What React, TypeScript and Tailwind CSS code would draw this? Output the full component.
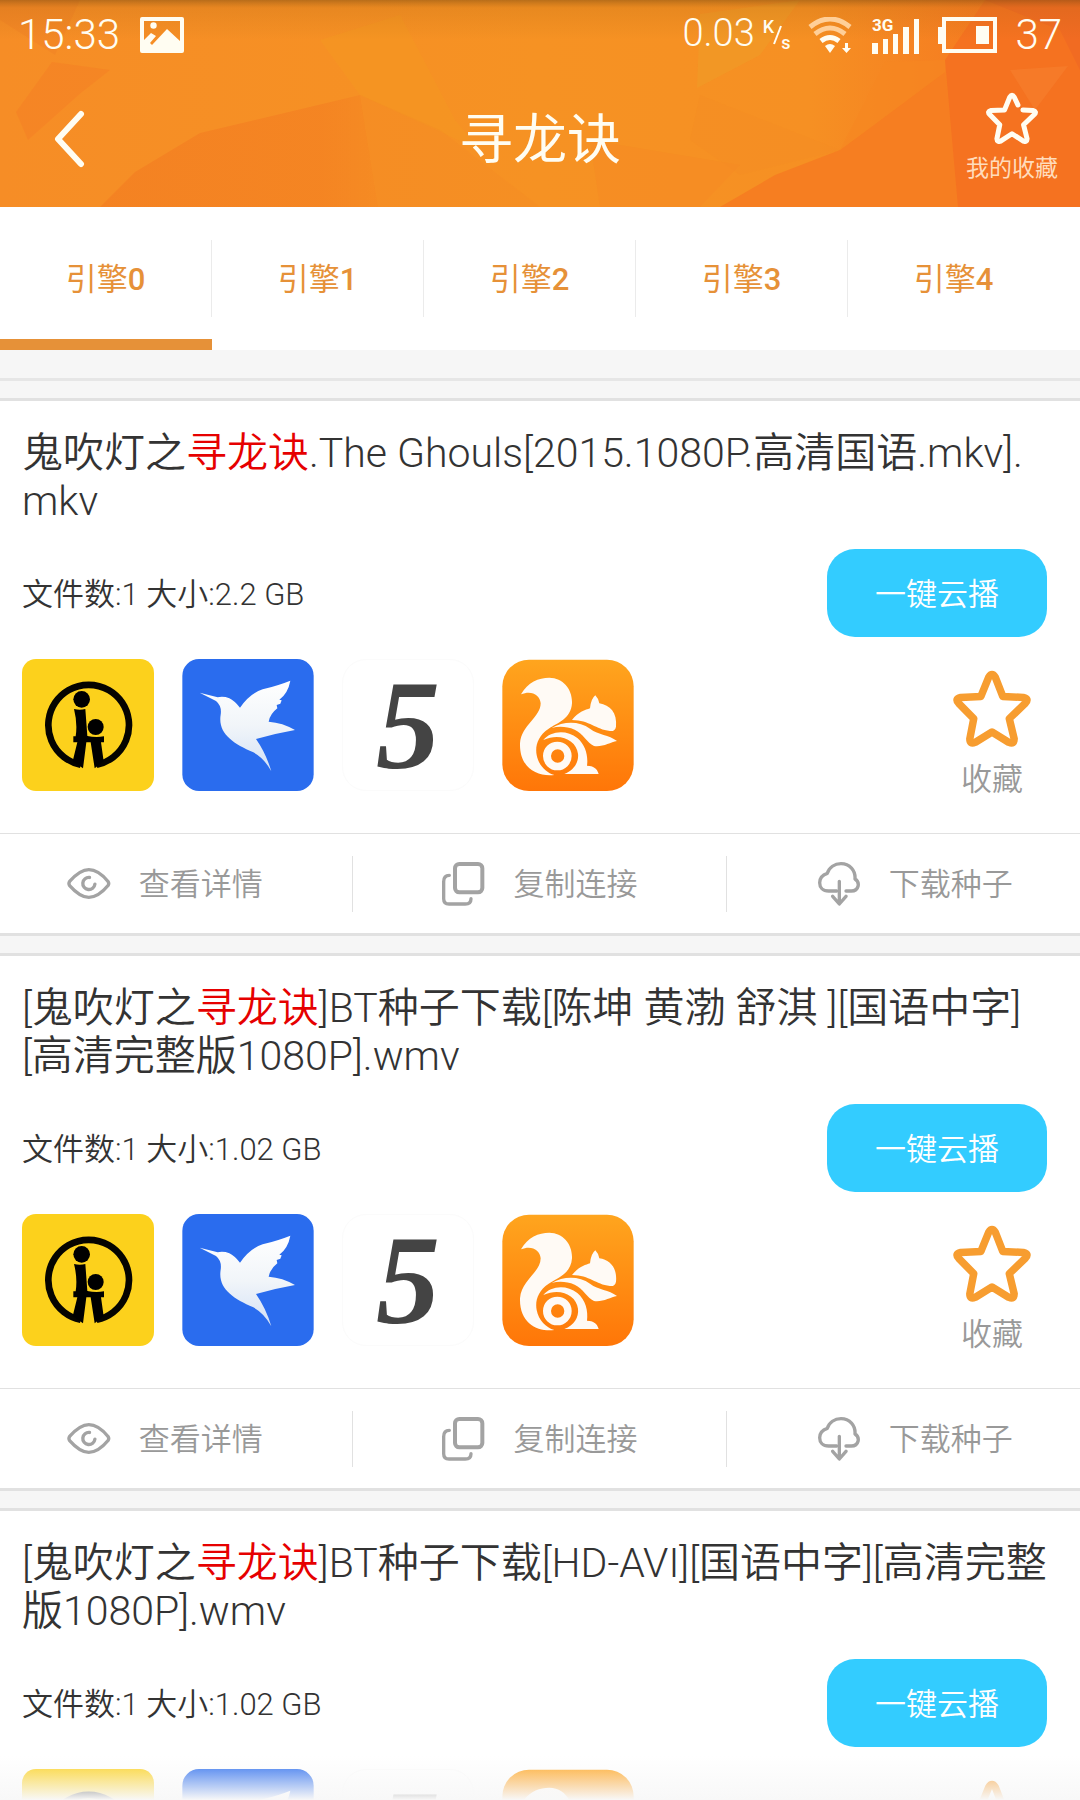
import { useState } from "react";

const engines = [0, 1, 2, 3, 4];

const keyword = "寻龙诀";

const results = [
  {
    id: 1,
    before: "鬼吹灯之",
    after: ".The Ghouls[2015.1080P.高清国语.mkv].mkv",
    files: 1,
    size: "2.2 GB",
  },
  {
    id: 2,
    before: "[鬼吹灯之",
    after: "]BT种子下载[陈坤 黄渤 舒淇 ][国语中字][高清完整版1080P].wmv",
    files: 1,
    size: "1.02 GB",
  },
  {
    id: 3,
    before: "[鬼吹灯之",
    after: "]BT种子下载[HD-AVI][国语中字][高清完整版1080P].wmv",
    files: 1,
    size: "1.02 GB",
  },
];

function HeaderBackground() {
  return (
    <svg className="absolute inset-0 w-full h-full" viewBox="0 0 1080 207" preserveAspectRatio="none" aria-hidden="true">
      <defs>
        <linearGradient id="base" x1="0" x2="1" y1="0" y2="0">
          <stop offset="0" stopColor="#f68d26" />
          <stop offset="0.5" stopColor="#f69223" />
          <stop offset="0.75" stopColor="#f69023" />
          <stop offset="1" stopColor="#f5701f" />
        </linearGradient>
        <linearGradient id="shade" x1="0" x2="0" y1="0" y2="1">
          <stop offset="0" stopColor="#7a4a10" stopOpacity="0.5" />
          <stop offset="0.2" stopColor="#a86010" stopOpacity="0.18" />
          <stop offset="1" stopColor="#a86010" stopOpacity="0" />
        </linearGradient>
        <linearGradient id="facet" x1="0" x2="1" y1="0" y2="0">
          <stop offset="0" stopColor="#f48122" stopOpacity="0.9" />
          <stop offset="0.8" stopColor="#f48122" stopOpacity="0.75" />
          <stop offset="1" stopColor="#f48122" stopOpacity="0.35" />
        </linearGradient>
      </defs>
      <rect width="1080" height="207" fill="url(#base)" />
      <path d="M52 62L110 70L82 92L28 140L16 112Z" fill="#f58024" opacity="0.6" />
      <path d="M0 0H80L55 55L0 20Z" fill="#f08025" opacity="0.4" />
      <path d="M100 207L135 172L200 133L360 95L378 207Z" fill="url(#facet)" />
      <path d="M360 95L320 40L400 15L455 120L480 150Z" fill="#f49a21" opacity="0.45" />
      <path d="M360 95L440 130L540 207H378Z" fill="#f48a24" opacity="0.35" />
      <path d="M697 88L700 14L800 0L760 55Z" fill="#f19a26" opacity="0.7" />
      <path d="M700 95L840 150L740 175L690 140Z" fill="#f68b22" opacity="0.4" />
      <path d="M590 140L740 165L700 207H600Z" fill="#f58a24" opacity="0.5" />
      <path d="M720 207L775 175L840 150L945 72L960 207Z" fill="#f67e21" />
      <path d="M885 62L945 60V72L870 128L840 150Z" fill="#f68722" opacity="0.6" />
      <path d="M945 60L985 0H1080V207H958Z" fill="#f57220" />
      <path d="M985 0H1080V70L1060 30Z" fill="#ee6424" opacity="0.5" />
      <path d="M1010 70L1068 66L1035 110Z" fill="#f78130" opacity="0.5" />
      <rect width="1080" height="40" fill="url(#shade)" />
    </svg>
  );
}

function StarIcon({ className, open = false }: { className: string; open?: boolean }) {
  const d = open
    ? "M625 499L671 502Q690 506 677 520L628 567L644 631Q643 648 627 642L575 608L523 642Q507 648 506 631L519 567L473 520Q460 506 479 502L541 499L565 440Q575 424 585 440L602 476"
    : "M608 499L671 502Q690 506 677 520L628 567L643 629Q643 647 627 640L575 608L523 640Q507 647 507 629L519 567L473 520Q460 506 479 502L541 499L565 440Q575 424 585 440Z";
  return (
    <svg className={className} viewBox="456 418 238 236" fill="none" stroke="currentColor" strokeLinecap="round" strokeLinejoin="round" strokeWidth="23" aria-hidden="true">
      <path d={d} />
    </svg>
  );
}

function StatusBar() {
  return (
    <div className="relative h-[70px] px-[18px] flex items-center justify-between">
      <div className="flex items-center gap-5">
        <span className="text-[42px] leading-[50px]">15:33</span>
        <svg className="w-11 h-9" viewBox="0 0 44 36" aria-hidden="true">
          <path fillRule="evenodd" fill="currentColor" d="M2 0H42Q44 0 44 2V34Q44 36 42 36H2Q0 36 0 34V2Q0 0 2 0ZM4 4V23L11 16L16 19L10 26L12 28L27 12L40 24V4Z" />
          <circle cx="13.500" cy="8.500" r="3.200" fill="currentColor" />
        </svg>
      </div>
      <div className="flex items-center">
        <span className="pb-1 text-[38px] leading-[46px]">0.03</span>
        <span className="ml-2 h-10 flex text-[18px] leading-[24px] font-medium">
          <span>K</span>
          <svg className="w-[9px] h-5 -mx-px shrink-0 self-center" viewBox="0 0 9 20" aria-hidden="true">
            <path d="M8 1L1 19" stroke="currentColor" strokeWidth="2" />
          </svg>
          <span className="self-end">s</span>
        </span>
        <svg className="ml-[18px] w-11 h-9" viewBox="0 0 44 36" fill="none" aria-hidden="true">
          <path d="M2 10Q22 -6 42 10" stroke="#ffcf98" strokeWidth="5" />
          <path d="M7 17Q22 5 37 17" stroke="#ffcf98" strokeWidth="5" />
          <path d="M13 24Q22 17 31 24" stroke="currentColor" strokeWidth="5" />
          <path d="M17 29Q22 25 27 29L22 36Z" fill="currentColor" />
          <path d="M37 26H40V31H43L38.500 36L34 31H37Z" fill="currentColor" />
        </svg>
        <svg className="ml-5 w-12 h-[38px]" viewBox="0 0 48 38" fill="currentColor" aria-hidden="true">
          <text x="0" y="15" fontSize="17" fontWeight="700">3G</text>
          <path d="M0 27H6V38H0ZM11 23H16V38H11ZM21 18H26V38H21ZM31 11H37V38H31ZM42 3H47V38H42Z" />
        </svg>
        <svg className="ml-[18px] w-[59px] h-9" viewBox="0 0 59 36" aria-hidden="true">
          <path d="M6 2H57V34H6Z" fill="none" stroke="currentColor" strokeWidth="4" />
          <path d="M0 10H5V27H0ZM38 9H51V27H38Z" fill="currentColor" />
        </svg>
        <span className="ml-[18px] text-[42px] leading-[50px]">37</span>
      </div>
    </div>
  );
}

function NavBar() {
  return (
    <div className="relative h-[137px] px-[22px] grid grid-cols-[1fr_auto_1fr] items-center">
      <button aria-label="返回" className="justify-self-start ml-7 p-1">
        <svg className="w-8 h-[58px]" viewBox="0 0 32 58" fill="none" stroke="currentColor" strokeWidth="6" strokeLinecap="round" strokeLinejoin="round">
          <path d="M27 4L4 29L27 54" />
        </svg>
      </button>
      <h1 className="pt-1 text-[54px] leading-[64px] font-normal">{keyword}</h1>
      <button className="justify-self-end flex flex-col items-center">
        <StarIcon open className="w-[52px] h-[52px]" />
        <span className="mt-[9px] text-[23px] leading-[32px] font-normal text-[#ffdcbc]">我的收藏</span>
      </button>
    </div>
  );
}

function XiguaIcon() {
  return (
    <svg className="w-full h-full" viewBox="66 57 396 396" aria-hidden="true">
      <rect x="66" y="57" width="396" height="396" rx="42" fill="#fcd11c" />
      <path d="M242 374A121 121 0 1 1 290 374" fill="none" stroke="#050400" strokeWidth="20" />
      <circle cx="245" cy="178" r="25" />
      <circle cx="287" cy="261" r="24" />
      <path d="M222 207Q240 211 256 207L262 288Q288 294 312 289V307H303L311 364L284 385L272 307H259L249 385L218 364L232 307H220V289H227Q233 250 222 207Z" />
    </svg>
  );
}

function XunleiIcon() {
  return (
    <svg className="w-full h-full" viewBox="549 57 394 396" aria-hidden="true">
      <defs>
        <linearGradient id="bird" x1="0" x2="0" y1="0" y2="1">
          <stop offset="0" stopColor="#ffffff" />
          <stop offset="0.5" stopColor="#f1f5f9" />
          <stop offset="1" stopColor="#d3e1f6" />
        </linearGradient>
      </defs>
      <rect x="549" y="57" width="394" height="396" rx="50" fill="#2a6cee" />
      <path
        d="M601 158L655 172Q672 168 690 175Q705 182 722 203Q752 160 790 148Q838 136 873 122Q866 160 840 179L847 181L843 191L832 195L834 205Q812 222 808 245Q850 248 887 270Q830 280 770 297Q800 340 816 394Q795 355 762 337C700 310 655 280 664 224Q668 198 650 183Z"
        fill="url(#bird)"
      />
    </svg>
  );
}

function UcIcon() {
  return (
    <svg className="w-full h-full" viewBox="549 57 394 396" aria-hidden="true">
      <defs>
        <linearGradient id="uc" x1="0" x2="0" y1="0" y2="1">
          <stop offset="0" stopColor="#ffa51e" />
          <stop offset="1" stopColor="#ff7608" />
        </linearGradient>
      </defs>
      <rect x="549" y="59" width="394" height="394" rx="80" fill="url(#uc)" />
      <g fill="#fffaf5">
        <path d="M605 163C625 127 658 113 690 113C732 114 760 148 758 190C755 236 716 248 688 266C655 288 647 318 652 345C658 376 680 398 705 405C655 411 600 385 602 310C606 255 664 232 664 190C662 165 637 150 605 163Z" />
        <path d="M758 240C778 215 798 210 812 205Q815 176 828 166Q837 175 840 190C872 195 894 218 890 260Q887 275 872 273C828 268 812 241 758 240Z" />
        <path d="M697 264C733 243 780 243 812 266C838 286 868 283 893 303C872 307 850 322 824 318C803 308 792 281 766 269C742 259 718 258 697 264Z" />
        <path d="M672 300C694 272 742 268 774 294C799 315 807 348 803 377C822 377 834 386 838 402H735C764 390 779 367 776 341C771 300 722 277 672 300Z" />
        <path fillRule="evenodd" d="M671 348A43 43 0 1 1 757 348A43 43 0 1 1 671 348ZM695 348A20 20 0 1 0 735 348A20 20 0 1 0 695 348Z" />
      </g>
    </svg>
  );
}

function EyeIcon() {
  return (
    <svg className="w-11 h-[31px]" viewBox="194 146 129 92" fill="none" stroke="currentColor" strokeWidth="10" strokeLinecap="round" strokeLinejoin="round" aria-hidden="true">
      <path d="M201 186Q232 151 258 151Q286 151 315 186Q319 192 315 198Q286 233 258 233Q232 233 201 198Q197 192 201 186Z" />
      <path d="M260 174A18 18 0 1 0 276 194" />
    </svg>
  );
}

function CopyIcon() {
  return (
    <svg className="w-11 h-11" viewBox="1283 126 128 132" fill="none" stroke="currentColor" strokeWidth="10" strokeLinecap="round" aria-hidden="true">
      <rect x="1323" y="132" width="82" height="85" rx="13" strokeWidth="12" />
      <path d="M1306 166Q1289 166 1289 185V236Q1289 252 1305 252H1354Q1371 252 1371 236" />
    </svg>
  );
}

function CloudIcon() {
  return (
    <svg className="w-11 h-11" viewBox="803 126 128 132" fill="none" stroke="currentColor" strokeWidth="10" strokeLinecap="round" strokeLinejoin="round" aria-hidden="true">
      <path d="M860 213H836C818 213 809 202 809 188C809 173 820 164 832 160C837 142 854 131 873 131C899 131 917 151 915 177C931 187 927 213 904 213H888" />
      <path d="M868 184V250M848 229L868 252L888 229" />
    </svg>
  );
}

const players = [
  { name: "西瓜影音", icon: <XiguaIcon /> },
  { name: "迅雷", icon: <XunleiIcon /> },
  {
    name: "5",
    icon: (
      <span className="w-full h-full flex items-center justify-center rounded-3xl border border-[#fbfbfb] font-['Liberation_Serif',serif] font-bold italic text-[128px] leading-[131px] text-[#444444]">
        5
      </span>
    ),
  },
  { name: "UC浏览器", icon: <UcIcon /> },
];

const actions = [
  { label: "查看详情", icon: <EyeIcon /> },
  { label: "复制连接", icon: <CopyIcon /> },
  { label: "下载种子", icon: <CloudIcon /> },
];

function ResultCard({ item }: { item: (typeof results)[number] }) {
  return (
    <article className="bg-white border-y-3 border-[#e1e1e1] overflow-hidden shrink-0">
      <div className="pl-[22px] pr-[33px] pt-7 pb-[35px]">
        <h2 className="-mr-3 text-[41px] leading-[48px] text-[#333333] break-all">
          {item.before}
          <em className="not-italic text-[#e60000]">{keyword}</em>
          {item.after}
        </h2>

        <div className="mt-6 flex items-center justify-between">
          <p className="pt-1 text-[31px] leading-[40px] text-[#333333]">
            文件数:{item.files} 大小:{item.size}
          </p>
          <button className="w-[220px] h-[88px] pt-1 rounded-[28px] bg-[#33ccff] text-[31px] text-white">一键云播</button>
        </div>

        <div className="mt-[22px] flex items-start justify-between">
          <div className="flex gap-7">
            {players.map((player) => (
              <a key={player.name} href="#" aria-label={player.name} className="block w-[132px] h-[132px]">
                {player.icon}
              </a>
            ))}
          </div>
          <button className="w-[110px] pt-[11px] flex flex-col items-center">
            <StarIcon className="w-[78px] h-[77px] text-[#f79d30]" />
            <span className="mt-[15px] text-[31px] leading-[36px] text-[#999999]">收藏</span>
          </button>
        </div>
      </div>

      {/* Actions */}
      <div className="border-t border-[#e1e1e1]">
        <div className="-mx-[22px] h-[99px] grid grid-cols-3 items-center divide-x divide-[#e1e1e1]">
          {actions.map((action) => (
            <button key={action.label} className="h-14 flex items-center justify-center gap-7 text-[#a3a3a3]">
              {action.icon}
              <span className="pt-[2px] text-[31px] leading-[40px] text-[#999999]">{action.label}</span>
            </button>
          ))}
        </div>
      </div>
    </article>
  );
}

export default function App() {
  const [active, setActive] = useState(0);

  return (
    <div className="relative w-full h-screen overflow-hidden flex flex-col bg-[#f6f6f6] font-[350] font-['Roboto','Noto_Sans_CJK_SC',sans-serif]">
      <header className="relative shrink-0 text-[#fffdf2]">
        <HeaderBackground />
        <StatusBar />
        <NavBar />
      </header>

      {/* Engine tabs */}
      <nav className="shrink-0 bg-white pr-5 grid grid-cols-5">
        {engines.map((engine) => (
          <button
            key={engine}
            onClick={() => setActive(engine)}
            className={`h-[143px] pt-[33px] flex flex-col justify-between text-[31px] font-normal text-[#e69138] ${
              active === engine ? "border-b-[11px] border-[#e69138]" : "pb-[11px]"
            }`}
          >
            <span
              className={`w-full h-[77px] pt-1 flex items-center justify-center border-r ${
                engine < engines.length - 1 ? "border-[#ebebeb]" : "border-transparent"
              }`}
            >
              引擎<span className="font-medium">{engine}</span>
            </span>
          </button>
        ))}
      </nav>

      <main className="pt-7 flex flex-col gap-[17px]">
        <div className="-mb-[17px] h-5 shrink-0 border-t-3 border-[#e6e6e6]" />
        {results.map((item) => (
          <ResultCard key={item.id} item={item} />
        ))}
      </main>

      {/* Fade over the list's cut edge */}
      <div className="absolute inset-x-0 bottom-0 h-11 pointer-events-none bg-linear-to-b from-[#f8f8f8]/0 to-[#f8f8f8]" />
    </div>
  );
}
